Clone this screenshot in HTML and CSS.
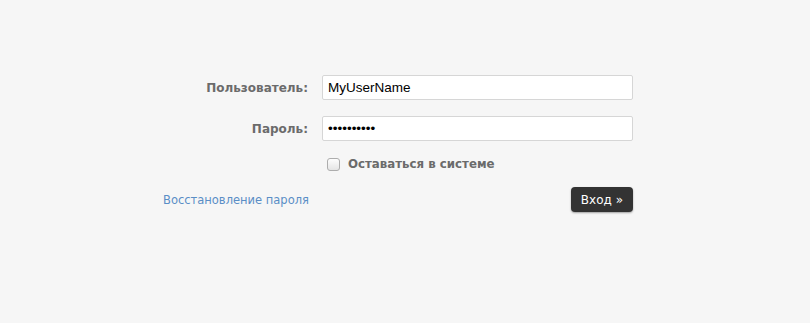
FILE: index.html
```html
<!DOCTYPE html>
<html lang="ru">
<head>
    <meta charset="UTF-8">
    <title>Вход</title>
    <link rel="stylesheet" href="styles.css">
</head>
<body>
    <!-- Login form -->
    <form class="login">
        <div class="row">
            <label class="label" for="user">Пользователь:</label>
            <input class="field" id="user" type="text" value="MyUserName">
        </div>
        <div class="row">
            <label class="label" for="pass">Пароль:</label>
            <input class="field" id="pass" type="password" value="1234567890">
        </div>
        <div class="row">
            <span class="label"></span>
            <label class="remember">
                <span class="box"></span>
                Оставаться в системе
            </label>
        </div>
        <div class="row actions">
            <a class="restore" href="#">Восстановление пароля</a>
            <button class="submit" type="button">Вход »</button>
        </div>
    </form>
</body>
</html>
```

FILE: styles.css
```css
body {
    margin: 0;
    background: #f6f6f6;
    font-family: "DejaVu Sans", Verdana, sans-serif;
    font-size: 12px;
    height: 323px;
}

.login {
    width: 470px;
    margin: 0 0 0 163px;
    padding-top: 75px;
}

.row {
    display: grid;
    grid-template-columns: 145px 311px;
    column-gap: 14px;
    align-items: center;
    margin-bottom: 16px;
}

.label {
    text-align: right;
    font-weight: bold;
    color: #6b6b6b;
}

.field {
    box-sizing: border-box;
    height: 25px;
    width: 311px;
    margin: 0;
    padding: 0 5px;
    border: 1px solid #d6d6d6;
    border-radius: 2px;
    background: #fff;
    font-family: "Liberation Sans", Arial, sans-serif;
    font-size: 13.5px;
    color: #000;
    outline: none;
}

.remember {
    display: flex;
    align-items: center;
    gap: 8px;
    padding-left: 5px;
    font-weight: bold;
    color: #6b6b6b;
    font-size: 11.8px;
}

.box {
    width: 11px;
    height: 11px;
    border: 1px solid #adadad;
    border-radius: 3px;
    background: linear-gradient(#fdfdfd, #e4e4e4);
}

.actions {
    display: flex;
    justify-content: space-between;
    margin-top: 2px;
}

.restore {
    color: #5a8ec6;
    text-decoration: none;
    font-size: 11.5px;
}

.submit {
    height: 25px;
    padding: 0 10px;
    border: 0;
    border-radius: 4px;
    background: #333;
    color: #fff;
    font-family: "DejaVu Sans", Verdana, sans-serif;
    font-size: 12px;
    box-shadow: 0 1px 2px rgba(0, 0, 0, 0.35);
}
```
